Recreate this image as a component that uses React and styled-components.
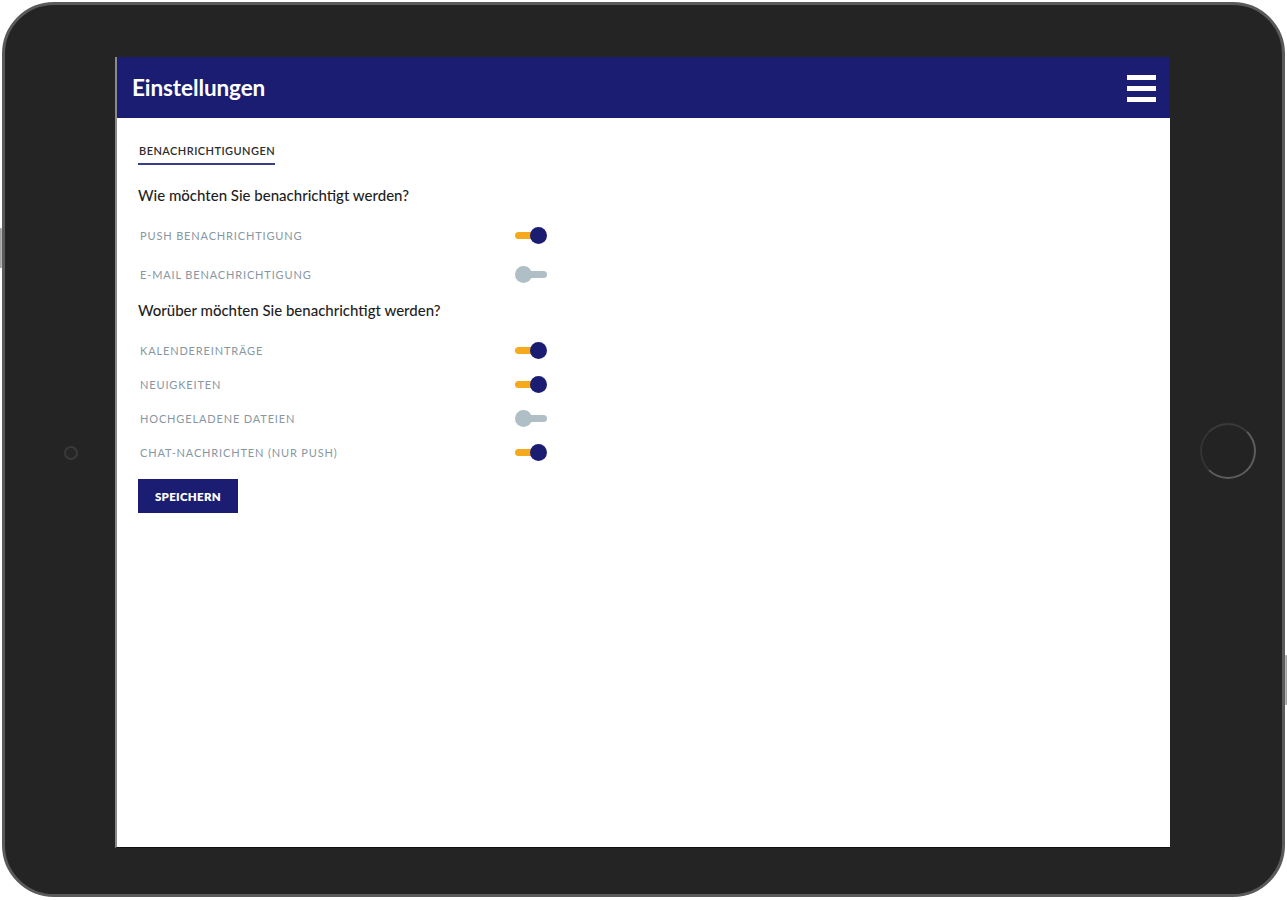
import React, { useState } from "react";
import styled, { createGlobalStyle } from "styled-components";

const GlobalStyle = createGlobalStyle`
  html, body { margin: 0; padding: 0; background: #ffffff; }
  body { font-family: Lato, "Noto Sans", sans-serif; }
  * { box-sizing: border-box; }
`;

const Stage = styled.div`
  position: relative;
  width: 1287px;
  height: 900px;
  padding: 2px 2px 3px 2px;
  background: #ffffff;
`;

const SideButton = styled.div`
  position: absolute;
  width: 10px;
  height: ${(p) => p.$h}px;
  top: ${(p) => p.$top}px;
  ${(p) => (p.$side === "left" ? "left: -2px;" : "right: -2px;")}
  border-radius: 4px;
  background: linear-gradient(90deg, #6a6a6a, #d9d9d9 50%, #6a6a6a);
`;

const Device = styled.div`
  position: relative;
  width: 100%;
  height: 100%;
  border: 3px solid #5a5a5a;
  border-radius: 52px;
  background: #242424;
  display: grid;
  grid-template-columns: 110px 1055px 1fr;
  grid-template-rows: 52px 791px 1fr;
`;

const Bezel = styled.div`
  display: flex;
  align-items: center;
  justify-content: ${(p) => p.$justify || "center"};
  padding: ${(p) => p.$pad || "0"};
`;

const Camera = styled.div`
  width: 14px;
  height: 14px;
  border-radius: 50%;
  border: 2px solid #3a3a3a;
  background: #262626;
`;

const HomeButton = styled.div`
  width: 56px;
  height: 56px;
  border-radius: 50%;
  border: 2px solid #5d5d5d;
  border-top-color: #3a3a3a;
  border-left-color: #333;
  background: #232323;
  margin-top: -4px;
`;

const Screen = styled.div`
  background: #ffffff;
  border-left: 2px solid #8a8a8a;
  border-bottom: 1px solid #111;
  display: flex;
  flex-direction: column;
  overflow: hidden;
`;

const Header = styled.header`
  height: 61px;
  flex: none;
  background: #1b1d72;
  display: flex;
  align-items: center;
  justify-content: space-between;
  padding: 0 14px 0 15px;
`;

const Title = styled.h1`
  margin: 0;
  color: #ffffff;
  font-family: Lato, sans-serif;
  font-weight: 700;
  font-size: 22.5px;
  letter-spacing: -0.1px;
`;

const Burger = styled.div`
  display: flex;
  flex-direction: column;
  gap: 6px;
  padding-top: 2px;
`;

const BurgerBar = styled.span`
  display: block;
  width: 29px;
  height: 5px;
  background: #ffffff;
`;

const Content = styled.main`
  padding: 24px 0 0 21px;
  display: flex;
  flex-direction: column;
`;

const TabBar = styled.div`
  display: flex;
  margin-bottom: 20px;
`;

const Tab = styled.div`
  font-family: Lato, sans-serif;
  font-size: 11px;
  font-weight: 600;
  letter-spacing: 0.45px;
  color: #2c2c2c;
  padding: 2px 0 6px 1px;
  border-bottom: 2px solid #3b3d8a;
`;

const Question = styled.h2`
  margin: 0;
  font-family: Lato, sans-serif;
  font-weight: 500;
  font-size: 15px;
  color: #1e1e1e;
  height: 20px;
  line-height: 20px;
`;

const OptionList = styled.div`
  display: flex;
  flex-direction: column;
  margin-top: ${(p) => p.$mt}px;
  margin-bottom: ${(p) => p.$mb}px;
  gap: ${(p) => p.$gap}px;
`;

const OptionRow = styled.label`
  display: grid;
  grid-template-columns: 377px 36px;
  align-items: center;
  height: 20px;
  cursor: pointer;
`;

const OptionLabel = styled.span`
  font-family: Lato, sans-serif;
  font-size: 11px;
  letter-spacing: 0.85px;
  color: #8797a2;
  padding-left: 2px;
  text-transform: uppercase;
`;

const Toggle = styled.span`
  position: relative;
  display: block;
  width: 33px;
  height: 18px;
`;

const Track = styled.span`
  position: absolute;
  top: 6px;
  left: ${(p) => (p.$on ? "0" : "4px")};
  width: ${(p) => (p.$on ? "26px" : "28px")};
  height: 7px;
  border-radius: 4px;
  background: ${(p) => (p.$on ? "#f5a91c" : "#b0bec5")};
`;

const Knob = styled.span`
  position: absolute;
  top: 1px;
  left: ${(p) => (p.$on ? "15px" : "0px")};
  width: 17px;
  height: 17px;
  border-radius: 50%;
  background: ${(p) => (p.$on ? "#1b1d72" : "#b0bec5")};
`;

const SaveButton = styled.button`
  align-self: flex-start;
  width: 100px;
  height: 34px;
  border: none;
  background: #1b1d72;
  color: #ffffff;
  font-family: Lato, sans-serif;
  font-weight: 800;
  font-size: 11.5px;
  letter-spacing: 0.3px;
  cursor: pointer;
`;

function Switch({ on, onClick }) {
  return (
    <Toggle onClick={onClick}>
      <Track $on={on} />
      <Knob $on={on} />
    </Toggle>
  );
}

export default function App() {
  const [how, setHow] = useState([
    { key: "push", label: "Push Benachrichtigung", on: true },
    { key: "mail", label: "E-Mail Benachrichtigung", on: false },
  ]);
  const [what, setWhat] = useState([
    { key: "cal", label: "Kalendereinträge", on: true },
    { key: "news", label: "Neuigkeiten", on: true },
    { key: "files", label: "Hochgeladene Dateien", on: false },
    { key: "chat", label: "Chat-Nachrichten (nur Push)", on: true },
  ]);

  const flip = (list, setList, key) =>
    setList(list.map((o) => (o.key === key ? { ...o, on: !o.on } : o)));

  return (
    <>
      <GlobalStyle />
      <Stage>
        <SideButton $side="left" $top={228} $h={40} />
        <SideButton $side="right" $top={655} $h={50} />
        <Device>
          <Bezel />
          <Bezel />
          <Bezel />
          <Bezel $justify="flex-start" $pad="0 0 0 59px">
            <Camera />
          </Bezel>
          <Screen>
            <Header>
              <Title>Einstellungen</Title>
              <Burger>
                <BurgerBar />
                <BurgerBar />
                <BurgerBar />
              </Burger>
            </Header>
            <Content>
              <TabBar>
                <Tab>BENACHRICHTIGUNGEN</Tab>
              </TabBar>
              <Question>Wie möchten Sie benachrichtigt werden?</Question>
              <OptionList $mt={20} $mb={16} $gap={19}>
                {how.map((o) => (
                  <OptionRow key={o.key}>
                    <OptionLabel>{o.label}</OptionLabel>
                    <Switch on={o.on} onClick={() => flip(how, setHow, o.key)} />
                  </OptionRow>
                ))}
              </OptionList>
              <Question>Worüber möchten Sie benachrichtigt werden?</Question>
              <OptionList $mt={20} $mb={17} $gap={14}>
                {what.map((o) => (
                  <OptionRow key={o.key}>
                    <OptionLabel>{o.label}</OptionLabel>
                    <Switch on={o.on} onClick={() => flip(what, setWhat, o.key)} />
                  </OptionRow>
                ))}
              </OptionList>
              <SaveButton>SPEICHERN</SaveButton>
            </Content>
          </Screen>
          <Bezel $justify="flex-start" $pad="0 0 0 30px">
            <HomeButton />
          </Bezel>
          <Bezel />
          <Bezel />
          <Bezel />
        </Device>
      </Stage>
    </>
  );
}
